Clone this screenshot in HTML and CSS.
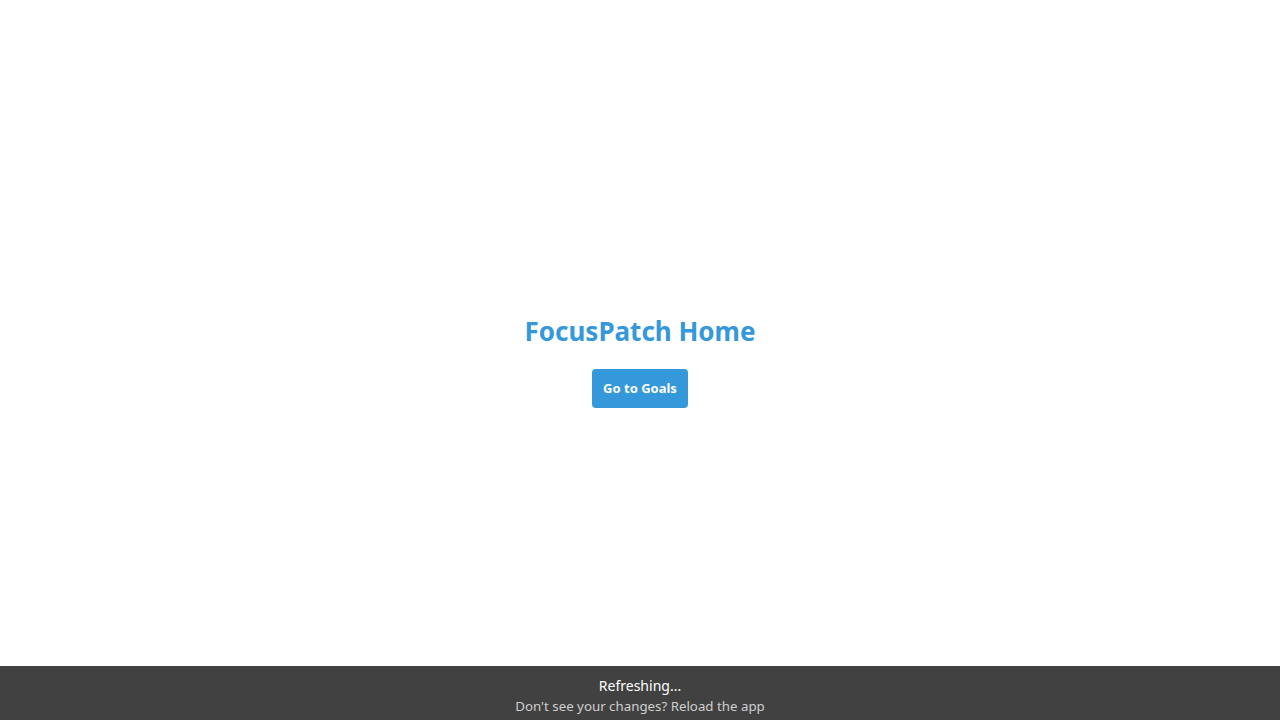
FILE: index.html
```html
<!DOCTYPE html>
<html>
<head>
<meta charset="utf-8">
<link rel="stylesheet" href="styles.css">
</head>
<body>
<main class="home">
  <h1 class="title">FocusPatch Home</h1>
  <button class="btn">Go to Goals</button>
</main>
<div class="refresh">
  <div class="refresh-title">Refreshing...</div>
  <div class="refresh-sub">Don't see your changes? Reload the app</div>
</div>
</body>
</html>
```
FILE: styles.css
```css
html, body {
  margin: 0;
  padding: 0;
  height: 100%;
  background: #ffffff;
  font-family: "Noto Sans", "Open Sans", sans-serif;
}
.home {
  height: 100%;
  display: flex;
  flex-direction: column;
  align-items: center;
  justify-content: center;
  gap: 20px;
}
.title {
  margin: 0;
  font-size: 26px;
  font-weight: 700;
  color: #3498db;
  line-height: 36px;
}
.btn {
  background: #3498db;
  color: #ffffff;
  border: none;
  border-radius: 4px;
  height: 39px;
  padding: 0 11px;
  font-family: inherit;
  font-size: 13px;
  font-weight: 700;
}
.refresh {
  position: fixed;
  left: 0;
  right: 0;
  bottom: 0;
  height: 54px;
  box-sizing: border-box;
  padding-top: 6px;
  background: #414141;
  display: flex;
  flex-direction: column;
  align-items: center;
  justify-content: center;
  line-height: 20px;
}
.refresh-title {
  color: #ffffff;
  font-size: 14px;
}
.refresh-sub {
  color: #cfcfcf;
  font-size: 13.3px;
}
```
